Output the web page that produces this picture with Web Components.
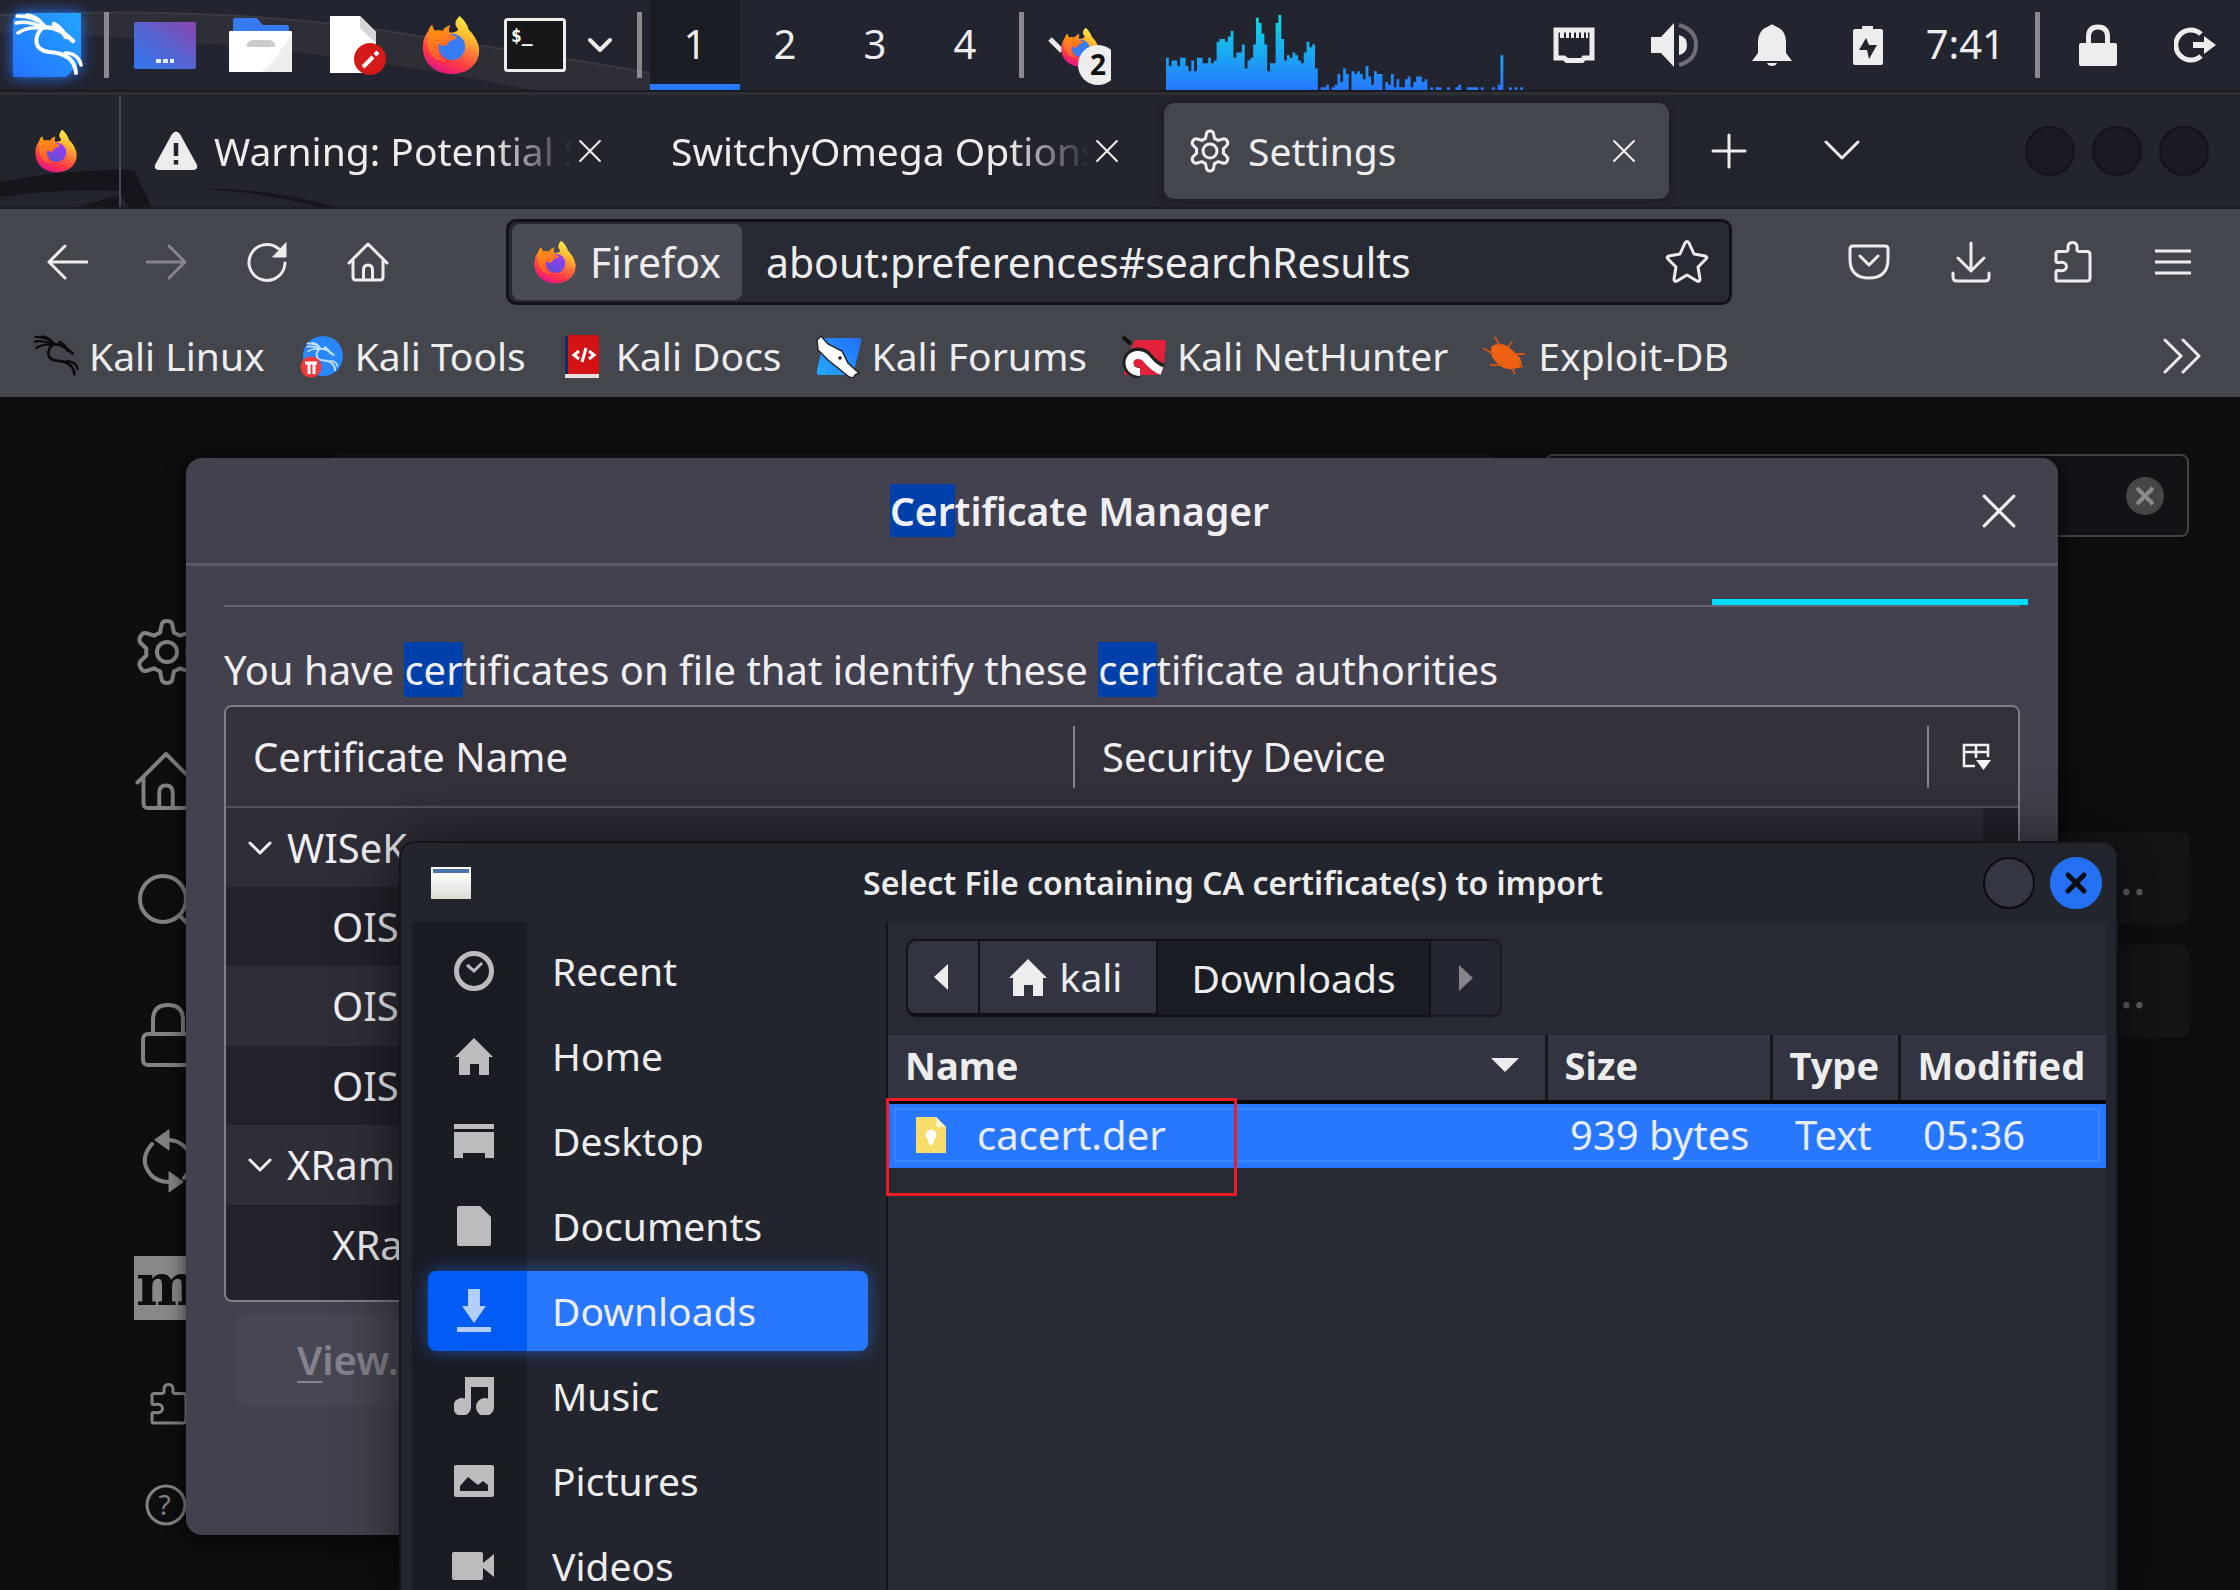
<!DOCTYPE html>
<html lang="en">
<head>
<meta charset="utf-8">
<title>Settings</title>
<style>
  html, body { margin: 0; height: 100%; }
  body {
    display: flex; flex-direction: column; height: 100vh; overflow: hidden;
    background: #0e0e10; color: #ededed;
    font: 400 40px/54px "Noto Sans", "Open Sans", sans-serif;
    --line: #77777c; --blue: #2777ff;
  }
</style>
</head>
<body>
<desk-panel></desk-panel>
<browser-tabs></browser-tabs>
<browser-nav></browser-nav>
<bookmark-bar></bookmark-bar>
<page-area>
  <settings-page></settings-page>
  <cert-manager slot="over"></cert-manager>
  <file-chooser slot="over"></file-chooser>
</page-area>

<script>
const base = `<style>
*{box-sizing:border-box}
:host{display:block;box-sizing:border-box}
button,input{font:inherit;color:inherit;background:none;border:0;padding:0;margin:0;outline:0}
button{display:flex;align-items:center;justify-content:center;cursor:pointer}
a{color:inherit;text-decoration:none}
ui-icon{flex:none}
.grow{flex:1}
</style>`;
function define(name, html) {
  const tpl = document.createElement('template');
  tpl.innerHTML = base + html;
  customElements.define(name, class extends HTMLElement {
    constructor() {
      super();
      this.attachShadow({ mode: 'open' }).append(tpl.content.cloneNode(true));
    }
  });
}

const gearPath = 'M18.5 4.5Q19 2 22 2Q25 2 25.500 4.500L26.500 9.500Q28.500 10.200 30.200 11.400L34.800 10Q37.500 9 39 11.600Q40.800 14.500 38.700 16.500L35.300 19.800Q35.700 22 35.300 24.200L38.700 27.500Q40.800 29.500 39 32.400Q37.500 35 34.800 34L30.200 32.600Q28.500 33.800 26.500 34.500L25.500 39.500Q25 42 22 42Q19 42 18.500 39.500L17.500 34.500Q15.500 33.800 13.800 32.600L9.200 34Q6.500 35 5 32.400Q3.200 29.500 5.300 27.500L8.700 24.200Q8.300 22 8.700 19.800L5.300 16.500Q3.200 14.500 5 11.600Q6.500 9 9.200 10L13.800 11.400Q15.500 10.200 17.500 9.500Z';
const housePath = '<path d="M3 23 22 4 41 23M7 20V37Q7 40 10 40H34Q37 40 37 37V20M17.500 40V30Q17.500 25 22 25Q26.500 25 26.500 30V40"/>';
const puzzlePath = '<path d="M4 13.500Q4 11.500 6 11.500H14Q16.500 11.500 16 8.500Q15.500 2.500 20.500 2.500Q25.500 2.500 25 8.500Q24.500 11.500 27 11.500H35Q38 11.500 38 14.500V38Q38 41 35 41H6Q4 41 4 39V32Q4 30 7 30.500Q14.500 31.500 14.500 26.500Q14.500 21.500 7 22.500Q4 23 4 21Z"/>';
const fox = centre => `<defs>
<linearGradient id="a" x1=".8" y1="0" x2=".35" y2="1"><stop offset="0" stop-color="#fff44f"/><stop offset=".3" stop-color="#ffbd2f"/><stop offset=".55" stop-color="#ff7139"/><stop offset=".78" stop-color="#ff3647"/><stop offset="1" stop-color="#e31587"/></linearGradient>
<linearGradient id="b" x1=".3" y1="0" x2=".6" y2="1"><stop offset="0" stop-color="#ff980e"/><stop offset="1" stop-color="#ff4f3a" /></linearGradient>
<linearGradient id="c" x1=".7" y1="0" x2=".3" y2="1"><stop offset="0" stop-color="${centre[0]}"/><stop offset="1" stop-color="${centre[1]}"/></linearGradient></defs>
<path fill="url(#a)" d="M41 1C46 5 50 11 51 16C55 19 61 28 62 36C63 53 49 63 32 63C15 63 2 51 2 35C2 26 5 20 8 17C8 15 10 12 12 11C12 14 13 16 14 17C17 16 20 16 23 17C25 14 28 12 31 11C30 14 29 17 31 19C37 18 42 17 38 13C35 9 38 4 41 1Z"/>
<circle cx="33" cy="34" r="14" fill="url(#c)"/>
<path fill="url(#b)" d="M8 17C10 12 11 11 12 11C13 14 14 16 15 17C18 16 21 16 23 17C25 14 28 12 31 11C29 15 29 18 30 20C32 22 38 22 38 24C36 27 31 27 29 29C30 32 25 33 23 33C21 31 19 31 18 32C17 41 22 48 30 50C17 51 9 43 8 34C7 27 7 21 8 17Z"/>`;
const dragon = `<g fill="none" stroke-linecap="round" stroke-linejoin="round"><path stroke-width="4" d="M29 15C21 24 20 37 36 39C52 40 62 46 63 60"/><path stroke-width="4.500" d="M28 15C40 12 50 18 60 28M41 11C46 14 50 18 53 24"/><path stroke-width="3.500" d="M4 3C14 3 24 6 31 12M3 10C12 8 20 10 27 13M5 20C12 15 20 14 28 15M14 2C22 3 27 7 30 12M52 40C62 40 67 46 68 52"/></g>`;
const line = (body, sw = 3) => `<g fill="none" stroke="currentColor" stroke-width="${sw}" stroke-linecap="round" stroke-linejoin="round">${body}</g>`;
const cross = line('<path d="M3 3 31 31M31 3 3 31"/>');

/* name: [width, height, viewBox, markup] */
const icons = {
  kali: [70, 64, '0 0 70 64', `<defs><linearGradient id="k" x1="1" y1="0" x2="0" y2="1"><stop offset="0" stop-color="#22a5ff"/><stop offset="1" stop-color="#2572ff"/></linearGradient></defs><path fill="url(#k)" d="M5 0H68V48L53 64H0V6Z"/><g stroke="#fff">${dragon}</g>`],
  desktop: [62, 47, '0 0 62 47', '<defs><linearGradient id="d" x1="0" y1="1" x2="1" y2="0"><stop offset="0" stop-color="#2f78f0"/><stop offset=".5" stop-color="#5563d2"/><stop offset="1" stop-color="#8c45ad"/></linearGradient></defs><rect width="62" height="47" rx="2" fill="url(#d)"/><path fill="#e9ecff" d="M22 37h5v4h-5zM29 37h5v4h-5zM36 37h4v4h-4z"/>'],
  folder: [63, 54, '0 0 63 54', '<path fill="#367bf0" d="M4 2Q4 0 6 0H26Q29 0 31 4L34 7H58Q60 7 60 9V20H4Z"/><rect y="13" width="63" height="41" rx="1" fill="#fff"/><path fill="#eee" d="M63 18V54H32Q46 44 52 31Z"/><path fill="#ccc" d="M18 26Q20 22 24 22H40Q44 22 46 26V29H18Z"/>'],
  editor: [60, 60, '0 0 60 60', '<path fill="#fff" d="M2 1H32L48 17V58H2Z"/><path fill="#d5d5d5" d="M32 1 48 17V28L32 13Z"/><circle cx="42" cy="44" r="16" fill="#d41919"/><path stroke="#fff" stroke-width="4" d="m35 52 10-10"/><path stroke="#fff" stroke-width="4" d="m47 40 3-3"/>'],
  firefoxflat: [60, 60, '0 0 64 64', fox(['#367bf0', '#367bf0'])],
  firefox: [44, 44, '0 0 64 64', fox(['#a33bff', '#5a4fd0'])],
  terminal: [62, 54, '0 0 62 54', '<rect x="1.500" y="1.500" width="59" height="51" rx="2" fill="#171717" stroke="#ededed" stroke-width="3"/><text x="7" y="24" fill="#fff" font-family="DejaVu Sans Mono, monospace" font-weight="700" font-size="18">$_</text>'],
  chev: [24, 16, '0 0 24 16', line('<path d="m2 3 10 10L22 3"/>', 4)],
  foxsmall: [63, 62, '0 0 63 62', `<path stroke="#ededed" stroke-width="5" d="m2 15 12 12"/><svg x="12" y="2" width="40" height="42" viewBox="0 0 64 64">${fox(['#367bf0', '#367bf0'])}</svg><circle cx="50" cy="41" r="20" fill="#ededed"/><text x="42" y="51" fill="#111" font-family="Noto Sans, sans-serif" font-weight="700" font-size="28">2</text>`],
  lan: [42, 36, '0 0 42 36', '<path fill="none" stroke="#ededed" stroke-width="5" d="M3 3H39V31H31L29 33.500H14L11 31H3Z"/><path fill="#ededed" d="M7 4h4v7H7zM13 4h3v7h-3zM18 4h3v7h-3zM23 4h3v7h-3zM28 4h3v7h-3zM33 4h2v7h-2z"/>'],
  sound: [48, 44, '0 0 48 44', '<path fill="#ededed" d="M0 14H10L23 0V44L10 30H0Z"/><path fill="#ededed" d="M28 12Q36 14 36 22Q36 30 28 32Z"/><path fill="none" stroke="#6d6e76" stroke-width="4" d="M28 2Q45 7 45 22Q45 37 28 42"/>'],
  bell: [40, 42, '0 0 40 42', '<path fill="#ededed" d="M17 2Q20-1 23 2Q34 6 34 18V29L40 37H0L6 29V18Q6 6 17 2ZM15 39H25Q24 42 20 42Q16 42 15 39Z"/>'],
  battery: [30, 40, '0 0 30 40', '<path fill="#ededed" fill-rule="evenodd" d="M9 1H20V4H28Q30 4 30 6V38Q30 40 28 40H2Q0 40 0 38V6Q0 4 2 4H9ZM13 13 6 25H14L16 34 24 20H16Z"/>'],
  lock: [38, 42, '0 0 38 42', '<path fill="none" stroke="#ededed" stroke-width="5" d="M9.500 22V13Q9.500 3 19 3Q28.500 3 28.500 13V22"/><rect y="19" width="38" height="23" rx="2" fill="#ededed"/>'],
  logout: [42, 36, '0 0 42 36', '<path fill="none" stroke="#ededed" stroke-width="5" d="M27 7A15 15 0 1 0 27 29"/><path fill="#ededed" d="M19 15H30V9L42 18L30 27V21H19Z"/>'],
  warn: [44, 40, '0 0 44 40', '<path fill="#ededed" d="M18 3Q22-2 26 3L43 34Q44 39 39 39H5Q0 39 1 34Z"/><path stroke="#23252e" stroke-width="4.500" d="M22 12V25M22 29V33.500"/>'],
  gear: [44, 44, '0 0 44 44', line(`<path d="${gearPath}"/><circle cx="22" cy="22" r="7"/>`)],
  biggear: [68, 68, '0 0 44 44', line(`<path d="${gearPath}"/><circle cx="22" cy="22" r="6.500"/>`, 2.6)],
  x: [24, 24, '0 0 34 34', cross],
  bigx: [36, 36, '0 0 34 34', cross],
  plus: [36, 36, '0 0 36 36', line('<path d="M18 2V34M2 18H34"/>')],
  down: [36, 24, '0 0 36 24', line('<path d="m2 3 16 16L34 3"/>')],
  back: [42, 36, '0 0 42 36', line('<path d="M41 18H3M19 2 3 18 19 34"/>')],
  fwd: [42, 36, '0 0 42 36', line('<path d="M1 18H39M23 2 39 18 23 34"/>')],
  reload: [42, 42, '0 0 42 42', line('<path d="M39 22A18 18 0 1 1 33 8"/><path fill="currentColor" stroke-width="1" d="M40 2V16H27Z"/>')],
  home: [44, 44, '0 0 44 44', line(housePath)],
  bighome: [66, 66, '0 0 44 44', line(housePath, 2.6)],
  star: [46, 46, '0 0 46 46', line('<path d="M21 4Q23 1 25 4L30 15 41 17Q44 18 42 20L34 28 36 40Q36 43 33 42L23 36 13 42Q10 43 10 40L12 28 4 20Q2 18 5 17L16 15Z"/>')],
  pocket: [42, 38, '0 0 42 38', line('<path d="M5 3H37Q40 3 40 6V16Q40 35 21 35Q2 35 2 16V6Q2 3 5 3ZM12 13 21 22 30 13"/>')],
  download: [40, 42, '0 0 40 42', line('<path d="M20 2V29M7 17 20 30 33 17M2 32V36Q2 40 6 40H34Q38 40 38 36V32"/>')],
  puzzle: [42, 44, '0 0 42 44', line(puzzlePath)],
  menu: [36, 28, '0 0 36 28', '<path stroke="currentColor" stroke-width="3" d="M0 3H36M0 14H36M0 25H36"/>'],
  bmkali: [46, 44, '0 0 70 64', `<g stroke="#0b0b0c">${dragon}</g>`],
  bmtools: [46, 44, '0 0 46 44', `<circle cx="24" cy="22" r="20" fill="#2a86fb"/><svg x="6" y="8" width="34" height="30" viewBox="0 0 70 64"><g stroke="#bfe0ff">${dragon}</g></svg><circle cx="12" cy="33" r="10.500" fill="#f23a3a"/><path stroke="#fff" stroke-width="3" d="M6 29H18M10 29V40M15 29V40"/>`],
  bmdocs: [46, 44, '0 0 46 44', '<path fill="#1b2a55" d="M5 2h5v38H5z"/><path fill="#d41414" d="M8 1H36Q39 1 39 4V40H8Z"/><path fill="#e8dede" d="M5 40H39V44H5Z"/><path fill="none" stroke="#fff" stroke-width="3" d="M19 17 14 21 19 25M29 17 34 21 29 25M26 14 22 28"/>'],
  bmforums: [46, 44, '0 0 46 44', '<defs><linearGradient id="f" x1="1" y1="0" x2="0" y2="1"><stop offset="0" stop-color="#2470ff"/><stop offset="1" stop-color="#22a8ff"/></linearGradient></defs><path fill="url(#f)" d="M8 4H43Q46 4 45 8L38 37Q37 41 33 41H4Q0 41 1 37Z"/><path fill="#fff" stroke="#222" stroke-width="1.500" d="M1 6 5 2 12 10 26 17 32 29 43 39 39 41 37 44 33 43 22 34 12 26 2 16Z"/><circle cx="24" cy="24" r="1.800" fill="#222"/>'],
  bmhunter: [46, 44, '0 0 46 44', '<path fill="#e4213a" d="M14 6H42Q46 6 45 10L42 36Q41 40 37 41H3V30Z"/><path fill="none" stroke="#222" stroke-width="11" d="M19 39C4 39 3 21 16 19C28 18 26 30 42 35"/><path fill="none" stroke="#fff" stroke-width="8" d="M19 38C6 38 5 22 16 21C27 20 26 32 41 37"/><path stroke="#111" stroke-width="4" d="m2 3 8 7"/>'],
  bmexploit: [46, 44, '0 0 46 44', '<path fill="#ee6112" d="M10 12Q20 6 30 16L38 24Q42 34 36 34Q22 38 14 28Q6 20 10 12Z"/><path stroke="#c9571a" stroke-width="2" fill="none" d="M13 3 18 12M1 14 11 20M8 31H20M34 20H43M30 34 33 40M26 13 30 8M36 30 41 33"/>'],
  more: [40, 36, '0 0 40 36', line('<path d="M3 2 19 18 3 34M21 2 37 18 21 34"/>')],
  bigsearch: [66, 66, '0 0 66 66', line('<circle cx="27" cy="27" r="23"/><path d="M44 44 62 62"/>', 4)],
  biglock: [56, 66, '0 0 56 66', line('<path d="M12 32V18Q12 3 27 3Q42 3 42 18V32"/><rect x="2" y="32" width="50" height="31" rx="5"/>', 4)],
  sync: [56, 66, '0 0 56 66', line('<path d="M10 16Q-4 32 9 47Q16 54 26 54M26 12Q36 12 43 19Q56 34 42 50"/><path fill="currentColor" stroke-width="1" d="M27 2V22L13 12ZM27 44V64L41 54Z"/>', 4)],
  moz: [64, 64, '0 0 64 64', '<rect width="64" height="64" fill="#88888a"/><text x="2" y="49" fill="#0e0e10" font-family="DejaVu Serif, serif" font-weight="700" font-size="58">m</text>'],
  help: [42, 42, '0 0 42 42', line('<circle cx="21" cy="21" r="19"/>') + '<text x="13.500" y="31" fill="currentColor" font-family="Noto Sans, sans-serif" font-size="28">?</text>'],
  clear: [40, 40, '0 0 40 40', '<circle cx="20" cy="20" r="19" fill="#464649"/><path stroke="#8b8b8e" stroke-width="4" d="M12 12 28 28M28 12 12 28"/>'],
  cols: [30, 28, '0 0 30 28', '<path fill="none" stroke="#f4f4f6" stroke-width="2.500" d="M13 23H2V2H26V14M2 9H26M14 2V15"/><path fill="#f4f4f6" d="M14 17H29L21.500 27Z"/>'],
  twist: [24, 18, '0 0 24 18', line('<path d="m2 4 10 10L22 4"/>')],
  win: [40, 32, '0 0 40 32', '<defs><linearGradient id="w" x2="0" y2="1"><stop offset=".2" stop-color="#fff"/><stop offset="1" stop-color="#d9dbd3"/></linearGradient></defs><rect width="40" height="32" fill="url(#w)"/><path fill="#4a72ad" d="M2 2h36v4H2z"/>'],
  winx: [24, 24, '0 0 24 24', '<path stroke="#0b0d14" stroke-width="5" stroke-linecap="round" d="M4 4 20 20M20 4 4 20"/>'],
  recent: [40, 40, '0 0 40 40', '<circle cx="20" cy="20" r="17.500" fill="none" stroke="currentColor" stroke-width="5"/><path fill="none" stroke="currentColor" stroke-width="3" d="m13 14 7 6 8-8"/>'],
  house: [40, 38, '0 0 40 38', '<path fill="currentColor" d="M20 1 39 20H35V38H25V27H16V38H5V20H1Z"/>'],
  desk: [40, 34, '0 0 40 34', '<path fill="currentColor" d="M0 0H40V5H0ZM0 8H40V34H31V29H9V34H0Z"/>'],
  doc: [34, 40, '0 0 34 40', '<path fill="currentColor" d="M2 0H23L34 11V38Q34 40 32 40H2Q0 40 0 38V2Q0 0 2 0Z"/>'],
  dl: [34, 44, '0 0 34 44', '<path fill="currentColor" d="M11 0H23V17H29L17 34 5 17H11ZM0 38H34V43H0Z"/>'],
  music: [40, 38, '0 0 40 38', '<path fill="currentColor" d="M11 0H40V29A9 9 0 1 1 34 21.500V10H17V29A9 9 0 1 1 11 21.500Z"/>'],
  pic: [40, 32, '0 0 40 32', '<path fill="currentColor" fill-rule="evenodd" d="M2 0H38Q40 0 40 2V30Q40 32 38 32H2Q0 32 0 30V2Q0 0 2 0ZM6 26H34V20L29 16 24 20 14 12 6 21Z"/>'],
  video: [44, 28, '0 0 44 28', '<path fill="currentColor" d="M2 0H29Q31 0 31 2V11L42 2V25L31 16V26Q31 28 29 28H2Q0 28 0 26V2Q0 0 2 0Z"/>'],
  left: [14, 26, '0 0 14 26', '<path fill="currentColor" d="M14 0V26L0 13Z"/>'],
  right: [14, 26, '0 0 14 26', '<path fill="currentColor" d="M0 0V26L14 13Z"/>'],
  sort: [28, 14, '0 0 28 14', '<path fill="currentColor" d="M0 0H28L14 14Z"/>'],
  cert: [30, 36, '0 0 30 36', '<path fill="#f7dc6a" d="M0 0H20L30 10V36H0Z"/><path fill="#fdf3c4" d="M20 0 30 10H20Z"/><circle cx="15" cy="18" r="5.500" fill="#fff"/><path fill="#fff" d="M12 20h6v5l-3 4-3-4z"/>'],
};
customElements.define('ui-icon', class extends HTMLElement {
  connectedCallback() {
    if (this.shadowRoot) return;
    const [w, h, box, body] = icons[this.getAttribute('name')];
    this.attachShadow({ mode: 'open' }).innerHTML =
      `<style>:host{display:inline-block;line-height:0}svg{display:block}</style><svg width="${w}" height="${h}" viewBox="${box}" aria-hidden="true">${body}</svg>`;
  }
});

/* CPU history drawn in the panel */
customElements.define('cpu-graph', class extends HTMLElement {
  connectedCallback() {
    if (this.shadowRoot) return;
    const v = [12,9,11,11,9,12,12,9,7,11,7,12,12,10,10,12,10,11,18,19,19,18,20,22,12,14,14,17,8,11,12,17,27,25,21,17,7,10,10,25,28,19,11,13,12,14,13,11,10,14,18,16,17,8,0,1,1,2,0,1,2,6,3,8,6,0,7,6,7,6,4,9,5,2,7,6,6,0,3,2,6,1,4,1,1,4,5,1,3,5,5,3,4,0,1,0,1,1,0,0,1,0,0,1,2,0,0,1,1,1,1,0,1,0,0,0,1,0,2,13,0,0,1,0,1,0,1];
    const d = v.map((n, i) => n ? `M${i} 28v-${n}h1v${n}z` : '').join('');
    this.attachShadow({ mode: 'open' }).innerHTML = `<style>:host{display:block}svg{display:block}</style>
      <svg width="357" height="75" viewBox="0 0 127 28" preserveAspectRatio="none"><defs><linearGradient id="g" gradientUnits="userSpaceOnUse" x1="0" y1="0" x2="0" y2="28"><stop offset="0" stop-color="#08e0e0"/><stop offset=".25" stop-color="#12c3ea"/><stop offset="1" stop-color="#2777ff"/></linearGradient></defs><path fill="url(#g)" d="${d}"/></svg>`;
  }
});

define('desk-panel', `<style>
:host{position:relative;flex:none;height:92px;background:#222430;border-bottom:2px solid #1a1b21;overflow:hidden}
.art{position:absolute;inset:0;width:740px;height:92px}
.bar{position:relative;display:flex;align-items:center;height:90px;padding:0 24px 0 13px}
.sep{width:5px;height:66px;background:#8a8a8e;flex:none}
button{flex:none}
.logo{margin-right:21px;filter:drop-shadow(0 0 7px #2777ff)}
.apps{display:flex;align-items:center;gap:36px;margin:0 25px}
.apps button:first-child{margin-right:-3px}
.ws{display:flex;height:90px;margin:0 9px 0 8px}
.ws button{width:90px;height:90px;padding-top:4px;border-bottom:6px solid transparent}
.ws .on{background:#1b1d25;border-bottom-color:var(--blue)}
.tray{display:flex;align-items:center}
time{padding-bottom:2px}
cpu-graph{align-self:flex-end;margin-left:55px}
</style>
<svg class="art" viewBox="0 0 740 92"><path fill="#2d2e36" d="M0 15Q250 4 440 40Q600 62 750 92H540Q300 40 0 33Z"/><path fill="none" stroke="#3a3b42" stroke-width="2" d="M0 15Q250 4 440 40Q600 62 750 92"/></svg>
<div class="bar">
 <button class="logo" aria-label="Applications"><ui-icon name="kali"></ui-icon></button><span class="sep"></span>
 <div class="apps">
  <button aria-label="Show desktop"><ui-icon name="desktop"></ui-icon></button>
  <button aria-label="Files"><ui-icon name="folder"></ui-icon></button>
  <button aria-label="Editor"><ui-icon name="editor"></ui-icon></button>
  <button aria-label="Firefox" style="margin-left:-3px"><ui-icon name="firefoxflat"></ui-icon></button>
  <button aria-label="Terminal" style="margin-left:-13px"><ui-icon name="terminal"></ui-icon></button>
  <button aria-label="More terminals" style="margin-left:-14px"><ui-icon name="chev"></ui-icon></button>
 </div><span class="sep"></span>
 <div class="ws"><button class="on">1</button><button>2</button><button>3</button><button>4</button></div>
 <span class="sep"></span>
 <button aria-label="Firefox windows" style="margin:20px 0 0 24px"><ui-icon name="foxsmall"></ui-icon></button>
 <cpu-graph></cpu-graph>
 <span class="grow"></span>
 <div class="tray">
  <button aria-label="Network" style="margin-right:56px"><ui-icon name="lan"></ui-icon></button>
  <button aria-label="Volume" style="margin-right:53px"><ui-icon name="sound"></ui-icon></button>
  <button aria-label="Notifications" style="margin-right:61px"><ui-icon name="bell"></ui-icon></button>
  <button aria-label="Battery" style="margin-right:43px"><ui-icon name="battery"></ui-icon></button>
  <time>7:41</time>
  <span class="sep" style="margin:0 39px 0 30px"></span>
  <button aria-label="Lock" style="margin-right:57px"><ui-icon name="lock"></ui-icon></button>
  <button aria-label="Log out"><ui-icon name="logout"></ui-icon></button>
 </div>
</div>`);

define('browser-tab', `<style>
:host{flex:1 1 0;display:flex;align-items:center;gap:16px;height:96px;padding:0 28px 0 24px;border-radius:10px;min-width:0;font-size:39px}
:host([active]){background:#44464d;box-shadow:0 0 8px #17181d}
.label{flex:1;min-width:0;overflow:hidden;white-space:nowrap;margin-right:-16px}
:host([fade]) .label{-webkit-mask-image:linear-gradient(90deg,#000 calc(100% - 80px),transparent);mask-image:linear-gradient(90deg,#000 calc(100% - 80px),transparent)}
button{width:34px;height:34px}
</style><slot name="icon"></slot><span class="label"><slot></slot></span><button aria-label="Close tab"><ui-icon name="x"></ui-icon></button>`);

define('browser-tabs', `<style>
:host{position:relative;flex:none;height:117px;background:#23252e;border-top:3px solid #2e3036;border-bottom:2px solid #1b1c22;overflow:hidden}
.art{position:absolute;left:0;bottom:0;width:360px;height:40px}
.bar{position:relative;display:flex;align-items:center;height:112px;padding-right:31px}
.pin{padding:0 41px 0 34px;height:112px;border-right:2px solid #4a4b52;margin-right:9px;flex:none}
.tabs{display:flex;flex:0 1 1539px;min-width:0;gap:12px}
.dot{width:50px;height:50px;flex:none;border-radius:50%;background:#1a1b22;border:2px solid #131418;margin-left:17px}
</style>
<svg class="art" viewBox="0 0 360 40"><path fill="#15161b" d="M0 15Q70 1 134 3L152 40H128L119 24Q50 22 0 30ZM78 40 119 28 122 40Z"/><path fill="#17181d" d="M195 22Q270 20 334 40H318Q260 24 195 22Z"/></svg>
<div class="bar">
 <button class="pin" aria-label="Firefox view"><ui-icon name="firefox"></ui-icon></button>
 <div class="tabs">
  <browser-tab fade><ui-icon slot="icon" name="warn"></ui-icon>Warning: Potential S</browser-tab>
  <browser-tab fade>SwitchyOmega Options</browser-tab>
  <browser-tab active><ui-icon slot="icon" name="gear"></ui-icon>Settings</browser-tab>
 </div>
 <button aria-label="New tab" style="margin-left:42px"><ui-icon name="plus"></ui-icon></button>
 <button aria-label="List tabs" style="margin-left:77px"><ui-icon name="down"></ui-icon></button>
 <span class="grow"></span>
 <button class="dot" aria-label="Minimize"></button><button class="dot" aria-label="Maximize"></button><button class="dot" aria-label="Close"></button>
</div>`);

define('browser-nav', `<style>
:host{flex:none;display:flex;align-items:center;height:106px;padding:0 49px 0 46px;background:#44464d;font-size:41px}
.g{display:flex;align-items:center;gap:58px}
.g.e{gap:61px}
.url{flex:1;display:flex;align-items:center;height:86px;margin:0 116px;padding:0 19px 0 3px;background:#272933;border:3px solid #121318;border-radius:10px}
.id{height:76px;padding:0 21px;gap:13px;background:#4a4c55;border-radius:8px;margin-right:24px}
input{flex:1;min-width:0;height:54px}
</style>
<div class="g"><button aria-label="Back"><ui-icon name="back"></ui-icon></button><button aria-label="Forward" disabled style="color:#84868b"><ui-icon name="fwd"></ui-icon></button><button aria-label="Reload"><ui-icon name="reload"></ui-icon></button><button aria-label="Home"><ui-icon name="home"></ui-icon></button></div>
<div class="url"><button class="id"><ui-icon name="firefox"></ui-icon>Firefox</button><input aria-label="Address" value="about:preferences#searchResults"><button aria-label="Bookmark"><ui-icon name="star"></ui-icon></button></div>
<div class="g e"><button aria-label="Pocket"><ui-icon name="pocket"></ui-icon></button><button aria-label="Downloads"><ui-icon name="download"></ui-icon></button><button aria-label="Extensions"><ui-icon name="puzzle"></ui-icon></button><button aria-label="Menu"><ui-icon name="menu"></ui-icon></button></div>`);

define('bookmark-bar', `<style>
:host{flex:none;display:flex;align-items:center;gap:34px;height:82px;padding:0 38px 0 33px;background:#44464d;font-size:39px}
a{display:flex;align-items:center;gap:10px;white-space:nowrap}
</style>
<a href="#linux"><ui-icon name="bmkali"></ui-icon>Kali Linux</a>
<a href="#tools"><ui-icon name="bmtools"></ui-icon>Kali Tools</a>
<a href="#docs"><ui-icon name="bmdocs"></ui-icon>Kali Docs</a>
<a href="#forums"><ui-icon name="bmforums"></ui-icon>Kali Forums</a>
<a href="#nethunter"><ui-icon name="bmhunter"></ui-icon>Kali NetHunter</a>
<a href="#exploit"><ui-icon name="bmexploit"></ui-icon>Exploit-DB</a>
<span class="grow"></span><button aria-label="More bookmarks"><ui-icon name="more"></ui-icon></button>`);

define('page-area', `<style>
:host{position:relative;flex:1;min-height:0;overflow:hidden;background:#0e0e10}
</style><slot></slot><slot name="over"></slot>`);

define('settings-page', `<style>
:host{display:flex;justify-content:space-between;padding:57px 51px 0 133px}
nav{display:flex;flex-direction:column;align-items:flex-start;color:#828284;padding-top:164px}
main{display:flex;flex-direction:column;align-items:flex-end;flex:1}
.top{display:flex;align-self:stretch;gap:50px;margin-left:130px;margin-bottom:295px}
.note{flex:1;height:60px;background:#161619;border-radius:8px}
label{display:flex;align-items:center;width:644px;height:83px;padding-right:22px;background:#121217;border:2px solid #424246;border-radius:8px}
input{flex:1;min-width:0}
.b{width:260px;height:93px;margin-bottom:20px;padding:0 43px 6px 0;justify-content:flex-end;background:#151518;border-radius:8px;color:#5f5f62;font-size:50px}
</style>
<nav>
 <ui-icon name="biggear"></ui-icon><ui-icon name="bighome" style="margin-top:62px"></ui-icon>
 <ui-icon name="bigsearch" style="margin:58px 0 0 3px"></ui-icon><ui-icon name="biglock" style="margin:64px 0 0 8px"></ui-icon>
 <ui-icon name="sync" style="margin:60px 0 0 9px"></ui-icon><ui-icon name="moz" style="margin:62px 0 0 1px"></ui-icon>
 <ui-icon name="puzzle" style="margin:62px 0 0 15px"></ui-icon><ui-icon name="help" style="margin:58px 0 0 12px"></ui-icon>
</nav>
<main>
 <div class="top"><div class="note"></div><label><input aria-label="Find in Settings"><ui-icon name="clear"></ui-icon></label></div>
 <button class="b">…</button><button class="b">…</button>
</main>`);

define('cert-manager', `<style>
:host{position:absolute;left:186px;right:182px;top:61px;bottom:55px;display:flex;flex-direction:column;background:#44414e;border-radius:16px;box-shadow:0 4px 20px #000a;color:#f0f0f4}
header{display:flex;align-items:center;height:108px;padding-right:33px;border-bottom:3px solid #5d5a67}
h2{flex:1;margin:0;text-align:center;font-size:39px;font-weight:600}
header button{width:52px;height:52px}
mark{background:#0040ab;color:inherit}
.strip{height:41px;margin:0 38px;border-bottom:2px solid #65636e;display:flex;justify-content:flex-end;align-items:flex-end}
.strip i{width:316px;height:6px;margin-right:-8px;background:#00ddff}
p{margin:0 38px;padding:36px 0 8px}
.box{margin:0 38px;height:597px;border:2px solid #807e87;border-radius:8px;background:#23222b;overflow:hidden}
table{width:100%;border-collapse:collapse;table-layout:fixed}
th{height:100px;padding:0;font-weight:400;text-align:left;background:#34313b;border-bottom:2px solid #545358}
.c{display:flex;align-items:center;height:62px;padding-left:27px}
.r{border-left:2px solid #85838c}
td{height:80px;padding:0}
tr:nth-child(even) td{height:79px}
tr.g td{background:#2f2d37}
td:last-child{background:#23222b!important}
.n{display:flex;align-items:center;white-space:nowrap;padding-left:22px;gap:15px}
.s{padding-left:106px}
.view{align-self:flex-start;width:260px;height:92px;margin:12px 0 0 49px;background:#494653;border-radius:8px;color:#84828c;font-weight:600;justify-content:flex-start;padding-left:62px}
u{text-underline-offset:6px;text-decoration-thickness:2px}
</style>
<header><h2><mark>Cer</mark>tificate Manager</h2><button aria-label="Close"><ui-icon name="bigx"></ui-icon></button></header>
<div class="strip"><i></i></div>
<p>You have <mark>cer</mark>tificates on file that identify these <mark>cer</mark>tificate authorities</p>
<div class="box"><table>
<colgroup><col style="width:847px"><col><col style="width:56px"><col style="width:35px"></colgroup>
<thead><tr><th><div class="c">Certificate Name</div></th><th><div class="c r">Security Device</div></th><th colspan="2"><div class="c r" style="padding-left:33px"><ui-icon name="cols"></ui-icon></div></th></tr></thead>
<tbody>
<tr class="g"><td colspan="3"><div class="n"><ui-icon name="twist"></ui-icon>WISeKey</div></td><td></td></tr>
<tr><td colspan="3"><div class="n s">OIS</div></td><td></td></tr>
<tr class="g"><td colspan="3"><div class="n s">OIS</div></td><td></td></tr>
<tr><td colspan="3"><div class="n s">OIS</div></td><td></td></tr>
<tr class="g"><td colspan="3"><div class="n"><ui-icon name="twist"></ui-icon>XRam</div></td><td></td></tr>
<tr><td colspan="3"><div class="n s">XRa</div></td><td></td></tr>
</tbody></table></div>
<button class="view"><span><u>V</u>iew…</span></button>`);

define('place-item', `<style>
button{width:100%;height:85px;justify-content:flex-start}
.i{display:flex;justify-content:center;width:115px;color:#bcbcbe;padding-left:9px}
.t{padding-left:25px}
:host([on]) button{height:80px;margin:3px 0 2px 16px;width:440px;border-radius:8px;background:linear-gradient(90deg,#005cf5 99px,#2777ff 99px);box-shadow:0 0 18px #2777ff88}
:host([on]) .i{width:99px;padding:0 7px 0 0;color:#b4cefb}
</style><button><span class="i"><slot name="icon"></slot></span><span class="t"><slot></slot></span></button>`);

define('file-chooser', `<style>
:host{position:absolute;left:399px;right:122px;top:444px;bottom:0;display:flex;flex-direction:column;background:#23252e;border:2px solid #14151a;border-bottom:0;border-radius:16px 16px 0 0;box-shadow:0 0 60px #0009;font-size:39px}
header{display:flex;flex:none;align-items:center;height:79px;padding:0 14px 0 30px}
h2{flex:1;margin:0 0 0 27px;text-align:center;font-size:32px;font-weight:600}
.w{width:52px;height:52px;border-radius:50%;background:#343742;border:2px solid #0b0c10;margin-left:15px}
.w.x{background:#2571f3;border-color:#2571f3}
.body{flex:1;display:flex;min-height:0;margin:0 10px 0 11px}
aside{width:476px;flex:none;padding-top:6px;overflow:hidden;border-right:2px solid #121318;background:linear-gradient(90deg,#1a1c24 115px,#23252e 115px)}
main{flex:1;min-width:0;background:#272933}
.path{display:flex;height:78px;margin:17px 0 18px 18px}
.path button{border:2px solid #111217;background:#323541;border-bottom-width:4px;border-left-width:0}
.path button:first-child{width:74px;padding-right:4px;border-left-width:2px;border-radius:10px 0 0 10px}
.path .h{width:178px;gap:12px;padding-right:6px}
.path .d{width:273px;background:#1b1d24;border-bottom-width:2px}
.path .e{width:71px;background:#242631;border-radius:0 10px 10px 0;border-color:#191a20;border-bottom-width:2px;color:#85868b}
.rel{position:relative}
table{width:100%;border-collapse:collapse;table-layout:fixed}
th{height:66px;padding:0 0 7px 17px;line-height:50px;text-align:left;font-weight:700;font-size:38px;background:#323541;border-top:2px solid #373a46;border-bottom:4px solid #07080b;border-left:3px solid #15161b}
th:first-child{border-left:0}
.f{display:flex;align-items:center;justify-content:space-between;padding-right:26px}
td{height:66px;padding:0 0 3px 24px;background:var(--blue);white-space:nowrap;color:#e8ecff;font-size:40px}
tbody tr{outline:2px solid #3b84ff;outline-offset:-8px}
.c{display:flex;align-items:center;gap:31px;padding-left:4px}
.mark{position:absolute;left:-2px;top:63px;width:351px;height:98px;border:3px solid #ee1c25}
</style>
<header><ui-icon name="win"></ui-icon><h2>Select File containing CA certificate(s) to import</h2><button class="w" aria-label="Maximize"></button><button class="w x" aria-label="Close"><ui-icon name="winx"></ui-icon></button></header>
<div class="body">
<aside>
 <place-item><ui-icon slot="icon" name="recent"></ui-icon>Recent</place-item>
 <place-item><ui-icon slot="icon" name="house"></ui-icon>Home</place-item>
 <place-item><ui-icon slot="icon" name="desk"></ui-icon>Desktop</place-item>
 <place-item><ui-icon slot="icon" name="doc"></ui-icon>Documents</place-item>
 <place-item on><ui-icon slot="icon" name="dl"></ui-icon>Downloads</place-item>
 <place-item><ui-icon slot="icon" name="music"></ui-icon>Music</place-item>
 <place-item><ui-icon slot="icon" name="pic"></ui-icon>Pictures</place-item>
 <place-item><ui-icon slot="icon" name="video"></ui-icon>Videos</place-item>
</aside>
<main>
 <div class="path"><button aria-label="Previous"><ui-icon name="left"></ui-icon></button><button class="h"><ui-icon name="house"></ui-icon>kali</button><button class="d">Downloads</button><button class="e" aria-label="Next"><ui-icon name="right"></ui-icon></button></div>
 <div class="rel"><table>
 <colgroup><col><col style="width:225px"><col style="width:128px"><col style="width:207px"></colgroup>
 <thead><tr><th><div class="f">Name<ui-icon name="sort"></ui-icon></div></th><th>Size</th><th>Type</th><th>Modified</th></tr></thead>
 <tbody><tr><td><div class="c"><ui-icon name="cert"></ui-icon>cacert.der</div></td><td>939 bytes</td><td>Text</td><td>05:36</td></tr></tbody>
 </table><div class="mark"></div></div>
</main>
</div>`);
</script>
</body>
</html>
